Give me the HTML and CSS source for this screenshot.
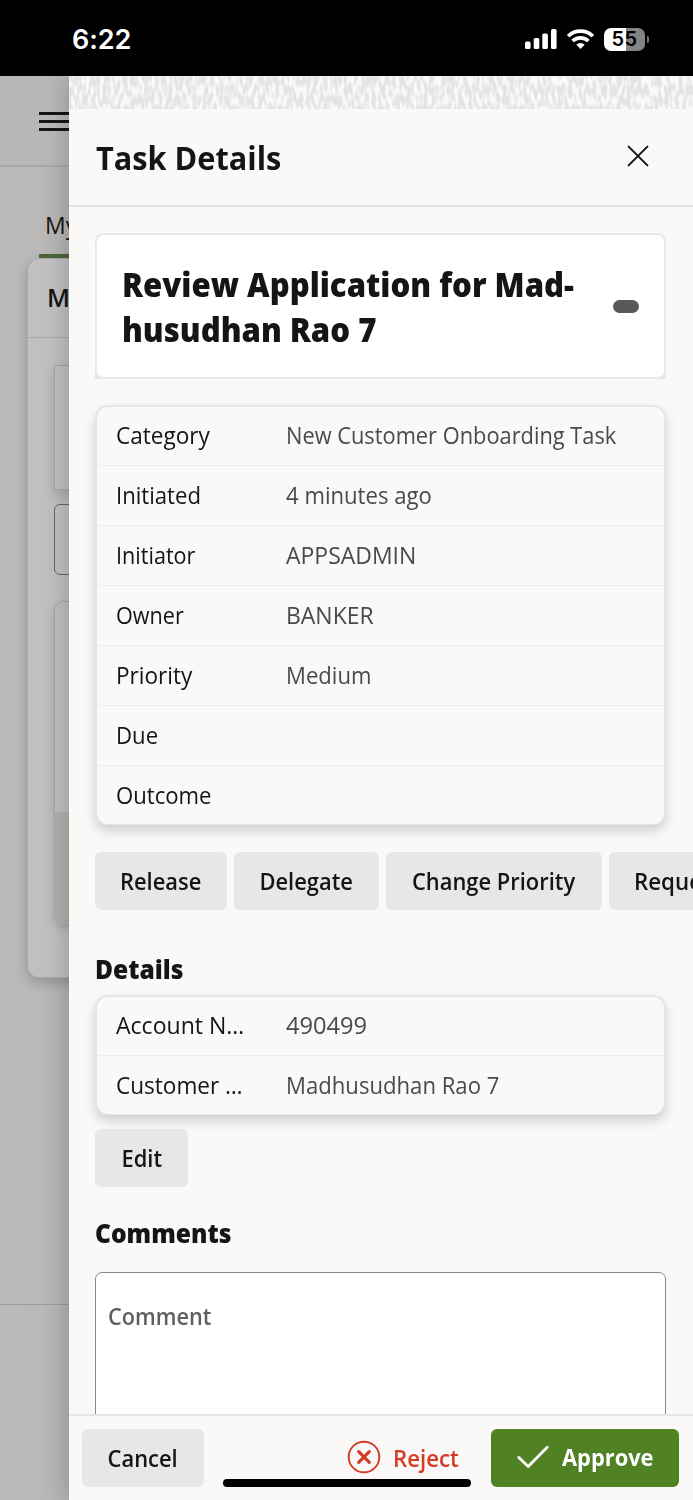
FILE: index.html
```html
<!DOCTYPE html>
<html lang="en">
<head>
<meta charset="utf-8">
<title>Task Details</title>
<link rel="stylesheet" href="styles.css">
</head>
<body>
<div class="phone">
  <header class="status">
    <span class="clock">6:22</span>
    <div class="indicators">
      <svg class="signal" width="32" height="20" viewBox="0 0 32 20" fill="#fff"><rect x="0" y="12.5" width="5.6" height="7.5" rx="1.6"/><rect x="8.7" y="9" width="5.6" height="11" rx="1.6"/><rect x="17.3" y="4.5" width="5.6" height="15.5" rx="1.6"/><rect x="26" y="0" width="5.6" height="20" rx="1.6"/></svg>
      <svg class="wifi" width="27" height="20" viewBox="0 0 27 20" fill="none" stroke="#fff" stroke-width="3.7"><path d="M1.2 7.2a17.6 17.6 0 0 1 24.6 0"/><path d="M5.6 12a11.4 11.4 0 0 1 15.8 0"/><path d="M13.5 20l-4.2-4.2a6 6 0 0 1 8.4 0z" fill="#fff" stroke="none"/></svg>
      <div class="battery"><span class="level">55</span><i class="cap"></i></div>
    </div>
  </header>
  <main class="stage">
    <section class="app">
      <div class="appbar"><div class="burger"><i></i><i></i><i></i></div></div>
      <div class="tabs"><span class="tab">My</span></div>
      <div class="board">
        <div class="board-head">M</div>
        <div class="board-body">
          <div class="tile"></div>
          <div class="search"></div>
          <div class="list"><div class="list-foot"></div></div>
        </div>
      </div>
      <div class="app-foot"></div>
    </section>
    <section class="drawer">
      <svg class="texture" width="624" height="33">
        <filter id="weave" x="0" y="0" width="100%" height="100%" color-interpolation-filters="sRGB">
          <feTurbulence type="fractalNoise" baseFrequency="0.29 0.1" numOctaves="1" seed="7"/>
          <feColorMatrix values="0 0 0 0 .9  0 0 0 0 .896  0 0 0 0 .89  5 0 0 0 -1.9"/>
        </filter>
        <rect width="624" height="33" filter="url(#weave)"/>
      </svg>
      <div class="drawer-head">
        <h1 class="title">Task Details</h1>
        <svg class="close" width="22" height="22" viewBox="0 0 22 22" stroke="#161513" stroke-width="2" stroke-linecap="round"><path d="M1.6 1.6l18.8 18.8M20.4 1.6L1.6 20.4"/></svg>
      </div>
      <div class="content">
        <div class="summary-wrap"><div class="summary">
          <h2 class="summary-title">Review Application for Mad-<br>husudhan Rao 7</h2>
          <span class="pill"></span>
        </div></div>
        <dl class="card info">
          <div class="row"><dt class="mid">Category</dt><dd class="long">New Customer Onboarding Task</dd></div>
          <div class="row"><dt>Initiated</dt><dd>4 minutes ago</dd></div>
          <div class="row"><dt class="tight">Initiator</dt><dd class="caps">APPSADMIN</dd></div>
          <div class="row"><dt class="tight">Owner</dt><dd class="caps">BANKER</dd></div>
          <div class="row"><dt class="mid">Priority</dt><dd>Medium</dd></div>
          <div class="row"><dt>Due</dt><dd></dd></div>
          <div class="row"><dt>Outcome</dt><dd></dd></div>
        </dl>
        <div class="actions">
          <button class="btn release"><span>Release</span></button><button class="btn delegate"><span>Delegate</span></button><button class="btn priority"><span>Change Priority</span></button><button class="btn request"><span>Request</span></button>
        </div>
        <h3 class="section details-title">Details</h3>
        <dl class="card details">
          <div class="row"><dt class="wide">Account N…</dt><dd class="digits">490499</dd></div>
          <div class="row"><dt class="mid">Customer …</dt><dd>Madhusudhan Rao 7</dd></div>
        </dl>
        <button class="btn edit"><span>Edit</span></button>
        <h3 class="section comments-title">Comments</h3>
        <div class="comment"><span>Comment</span></div>
      </div>
      <footer class="footer">
        <button class="btn cancel"><span>Cancel</span></button>
        <button class="reject">
          <svg width="34" height="34" viewBox="0 0 34 34" fill="none" stroke="#d63b25" stroke-linecap="round"><circle cx="17" cy="17" r="15.3" stroke-width="1.9"/><path d="M11.7 11.7l10.6 10.6M22.3 11.7L11.7 22.3" stroke-width="3.2"/></svg>
          <span class="reject-label">Reject</span>
        </button>
        <button class="approve">
          <svg width="32" height="24" viewBox="0 0 32 24" fill="none" stroke="#fff" stroke-width="2.8" stroke-linecap="round" stroke-linejoin="round"><path d="M1.8 12.5l9.4 9L30.2 2.2"/></svg>
          <span class="approve-label">Approve</span>
        </button>
      </footer>
    </section>
    <div class="home-bar"></div>
  </main>
</div>
</body>
</html>
```
FILE: styles.css
```css
* { box-sizing: border-box; }
body, h1, h2, h3, dl, dt, dd { margin: 0; }
body { background: #000; font-family: "Open Sans", "Noto Sans", sans-serif; color: #161513; }
button { font: inherit; color: inherit; border: 0; padding: 0; }
.phone { display: flex; flex-direction: column; width: 693px; height: 1500px; overflow: hidden; }
.status { display: flex; justify-content: space-between; align-items: center; height: 76px; flex: none; background: #000; color: #fff; padding: 2px 44px 0 72px; }
.clock { padding-top: 2px; font: 600 27px/32px Inter, sans-serif; letter-spacing: -.1px; }
.indicators { display: flex; align-items: center; height: 24px; }
.wifi { margin-left: 10px; }
.battery { display: flex; align-items: center; margin-left: 10px; }
.level { width: 41px; height: 23px; border-radius: 7px; background: linear-gradient(90deg, #fff 22px, #848484 22px); color: #000; font: 600 20px/23px Inter, sans-serif; text-align: center; letter-spacing: .4px; }
.cap { width: 2px; height: 7px; margin-left: 2px; border-radius: 0 3px 3px 0; background: #777; }

.stage { position: relative; flex: 1; overflow: hidden; }
.app { height: 100%; width: 693px; background: linear-gradient(90deg, #bcb9ba 0, #bbb9b7 40px, #b6b4b3 69px); }
.appbar { height: 91px; padding: 36px 0 0 39px; background: #b9b8b6; border-bottom: 2px solid #a9a8a8; }
.burger { display: flex; flex-direction: column; gap: 5px; width: 40px; }
.burger i { height: 3px; background: #161513; }
.tabs { display: flex; height: 91px; padding-left: 39px; }
.tab { border-bottom: 4px solid #4a653c; padding: 38px 7px 0 6px; font-size: 23px; line-height: 40px; white-space: nowrap; height: 91px; }
.board { width: 640px; height: 720px; margin-left: 27px; border: 1px solid #a9a9a9; border-radius: 12px; background: #c0c0c0; box-shadow: 0 5px 13px rgba(0,0,0,.2); }
.board-head { height: 79px; border-bottom: 1px solid #a9a9a9; padding: 18px 0 0 19px; font-weight: 600; font-size: 25px; line-height: 40px; }
.board-body { padding: 27px 26px 0; display: flex; flex-direction: column; }
.tile { height: 125px; border: 1px solid #a5a5a5; box-shadow: 0 5px 10px rgba(0,0,0,.14); }
.search { height: 71px; margin-top: 14px; border: 1.5px solid #646464; border-radius: 6px; background: #c0c0c0; }
.list { height: 324px; margin-top: 26px; border: 1px solid #a5a5a5; border-radius: 10px; box-shadow: 0 4px 10px rgba(0,0,0,.14); display: flex; flex-direction: column; justify-content: flex-end; }
.list-foot { height: 112px; background: #b2b1ad; border-radius: 0 0 10px 10px; }
.app-foot { height: 200px; margin-top: 326px; border-top: 1px solid #9e9c9b; }

.drawer { position: absolute; inset: 0 0 0 69px; display: flex; flex-direction: column; background: #faf9f7; box-shadow: 0 0 24px rgba(0,0,0,.24); }
.texture { flex: none; }
.drawer-head { flex: none; height: 98px; border-bottom: 2px solid #e6e5e4; display: flex; justify-content: space-between; align-items: flex-start; padding: 27px 44px 0 27px; }
.title { font-size: 33px; line-height: 44px; font-weight: 700; white-space: nowrap; transform: scaleX(.93); transform-origin: left; }
.close { margin-top: 9px; }
.content { flex: 1; min-height: 0; overflow: hidden; padding: 26px 27px 0 26px; }
.summary-wrap { background: #e6e5e3; border-radius: 8px 8px 0 0; }
.summary { height: 146px; background: #fff; border: 2px solid #ebeaea; border-radius: 9px; padding: 28px 25px 0 26px; display: flex; justify-content: space-between; }
.summary-title { margin: -1px 0 0 -1px; width: 460px; font-size: 33px; line-height: 45px; font-weight: 800; white-space: nowrap; transform: scaleX(.943); transform-origin: left; }
.pill { width: 26px; height: 13px; border-radius: 7px; background: #5b5957; margin-top: 37px; }
.card { border: 2px solid #e6e5e4; border-bottom-width: 1px; border-radius: 13px; background: #faf9f7; box-shadow: 0 6px 12px rgba(0,0,0,.17); }
.info { margin-top: 26px; }
.row { display: grid; grid-template-columns: 170px 1fr; height: 60px; padding-left: 19px; border-bottom: 1px solid #eeedec; font-size: 24px; line-height: 58px; white-space: nowrap; }
.row:first-child { height: 59px; line-height: 56px; }
.row:last-child { border-bottom: 0; height: 58px; }
dt, dd { transform: scaleX(.922); transform-origin: left; }
dt.mid { transform: scaleX(.94); }
dt.tight { transform: scaleX(.9); }
dt.wide { transform: scaleX(.96); }
dd.long { transform: scaleX(.909); }
dd.caps { transform: scaleX(.957); }
dd.digits { transform: scaleX(.985); }
dd { color: #4b4a48; }
.actions { display: flex; gap: 7px; margin-top: 27px; width: 640px; }
.btn { height: 58px; border-radius: 6px; background: #e8e7e5; font-size: 23.5px; font-weight: 600; line-height: 56px; flex: none; white-space: nowrap; }
.btn span { display: inline-block; transform: scaleX(.932); }
.release { width: 132px; }
.delegate { width: 145px; }
.priority { width: 216px; }
.request { width: 200px; text-align: left; padding-left: 25px; }
.btn.request span { transform: scaleX(.95); transform-origin: left; }
.section { font-size: 26px; line-height: 36px; font-weight: 800; white-space: nowrap; transform: scaleX(.945); transform-origin: left; }
.details-title { margin-top: 41px; }
.details { margin-top: 8px; }
.edit { display: block; width: 93px; margin-top: 14px; }
.comments-title { margin-top: 28px; }
.comment { height: 260px; margin-top: 21px; border: 1.5px solid #8b8a89; border-radius: 7px; background: #fff; color: #605f5d; font-size: 24px; font-weight: 600; line-height: 32px; padding: 27px 12px; }
.comment span { display: inline-block; transform: scaleX(.905); transform-origin: left; }
.footer { flex: none; height: 86px; border-top: 2px solid #e6e5e4; display: flex; padding: 13px 14px 0 13px; }
.cancel { width: 122px; line-height: 55px; }
.reject { display: flex; align-items: center; gap: 12px; height: 56px; margin-left: 143px; background: none; color: #d63b25; font-size: 24px; font-weight: 600; width: 144px; }
.reject-label { transform: scaleX(.925); transform-origin: left; }
.approve { display: flex; align-items: center; gap: 13px; height: 58px; width: 188px; padding: 0 0 3px 26px; border-radius: 6px; background: #508223; color: #fff; font-size: 24px; font-weight: 700; }
.approve-label { transform: scaleX(.91); transform-origin: left; }
.home-bar { position: absolute; left: 223px; bottom: 13px; width: 248px; height: 8px; border-radius: 4px; background: #000; }
```
